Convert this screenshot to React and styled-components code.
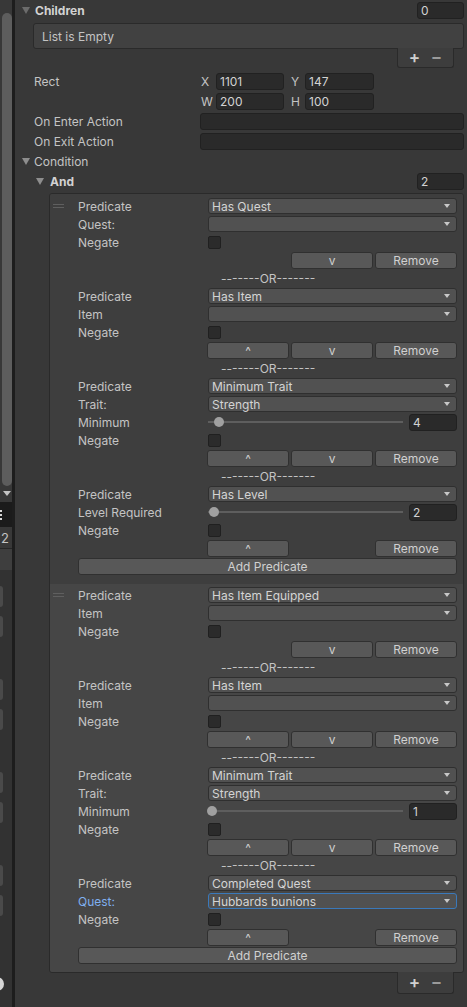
import React from "react";
import styled, { createGlobalStyle } from "styled-components";

const GlobalStyle = createGlobalStyle`
  html, body { margin: 0; padding: 0; background: #383838; }
  body {
    font-family: Inter, "Noto Sans", sans-serif;
    font-size: 12px;
    color: #c4c4c4;
  }
  * { box-sizing: border-box; }
`;

const Screen = styled.div`
  display: flex;
  width: 467px;
  height: 1007px;
  overflow: hidden;
  background: #383838;
`;

/* ---------- clipped side panel on the left ---------- */

const Side = styled.div`
  width: 12px;
  flex-shrink: 0;
  display: flex;
  flex-direction: column;
  overflow: hidden;
  background: #383838;
`;

const ScrollTrack = styled.div`
  height: 502px;
  padding: 13px 0 0 2px;
  display: flex;
  flex-direction: column;
  align-items: center;
`;

const ScrollThumb = styled.div`
  width: 10px;
  height: 473px;
  border-radius: 5px;
  background: #5d5d5d;
`;

const ScrollArrow = styled.div`
  margin-top: 5px;
  border-left: 4px solid transparent;
  border-right: 4px solid transparent;
  border-top: 5px solid #c4c4c4;
`;

const DarkBand = styled.div`
  height: 25px;
  background: #1b1b1b;
  display: flex;
  flex-direction: column;
  justify-content: center;
  gap: 2px;
`;

const KebabDot = styled.div`
  width: 2px;
  height: 2px;
  background: #d8d8d8;
`;

const CountBand = styled.div`
  height: 22px;
  display: flex;
  align-items: center;
  padding-left: 1px;
  font-size: 13px;
  color: #c4c4c4;
  border-bottom: 1px solid #262626;
`;

const LightBand = styled.div`
  height: 21px;
  background: #3e3e3e;
`;

const SideList = styled.div`
  flex: 1;
  background: #323232;
  display: flex;
  flex-direction: column;
  padding-top: 16px;
`;

const NubPair = styled.div`
  display: flex;
  flex-direction: column;
  gap: 9px;
  margin-bottom: 42px;
`;

const Nub = styled.div`
  width: 3px;
  height: 21px;
  border-radius: 0 4px 4px 0;
  background: #4a4a4a;
`;

const SideDot = styled.div`
  width: 14px;
  height: 14px;
  border-radius: 50%;
  background: #d6d6d6;
  margin: 19px 0 0 -10px;
`;

const Divider = styled.div`
  width: 3px;
  flex-shrink: 0;
  background: #1d1d1d;
`;

/* ---------- inspector ---------- */

const Main = styled.div`
  flex: 1;
  display: flex;
  flex-direction: column;
  padding-right: 3px;
  min-width: 0;
`;

const Row = styled.div`
  display: flex;
  align-items: center;
  height: 20px;
  padding-left: ${(p) => p.$indent || 0}px;
`;

const Fold = styled.span`
  width: 0;
  height: 0;
  flex-shrink: 0;
  border-left: 4px solid transparent;
  border-right: 4px solid transparent;
  border-top: 7px solid ${(p) => (p.$dim ? "#6c6c6c" : "#8e8e8e")};
  margin-right: ${(p) => p.$gap}px;
`;

const HeadLabel = styled.span`
  flex: 1;
  font-weight: ${(p) => (p.$bold ? 700 : 400)};
  color: ${(p) => (p.$bold ? "#d2d2d2" : "#c4c4c4")};
`;

const FieldLabel = styled.span`
  width: ${(p) => p.$w}px;
  flex-shrink: 0;
  color: #c4c4c4;
`;

const DarkField = styled.div`
  height: 17px;
  width: ${(p) => (p.$w ? `${p.$w}px` : "auto")};
  flex: ${(p) => (p.$w ? "none" : 1)};
  background: #2a2a2a;
  border: 1px solid #212121;
  border-radius: 3px;
  padding-left: 3px;
  display: flex;
  align-items: center;
  color: #d2d2d2;
`;

const Axis = styled.span`
  width: ${(p) => p.$w}px;
  flex-shrink: 0;
  padding-left: ${(p) => p.$pad || 1}px;
  color: #c4c4c4;
`;

const EmptyBox = styled.div`
  margin: 3px 0 0 18px;
  height: 26px;
  background: #414141;
  border: 1px solid #2a2a2a;
  border-radius: 3px;
  display: flex;
  align-items: center;
  padding-left: 8px;
  color: #c4c4c4;
`;

const ListFooter = styled.div`
  align-self: flex-end;
  margin-right: 10px;
  width: 57px;
  height: ${(p) => p.$h}px;
  margin-top: -1px;
  background: #3d3d3d;
  border: 1px solid #2a2a2a;
  border-top: none;
  border-radius: 0 0 3px 3px;
  display: flex;
  align-items: center;
  justify-content: space-evenly;
  padding-bottom: 1px;
`;

const FooterSign = styled.span`
  font-size: 17px;
  font-weight: 600;
  line-height: 1;
  color: ${(p) => (p.$dim ? "#9a9a9a" : "#d0d0d0")};
`;

const ListBox = styled.div`
  margin: 2px 0 0 34px;
  border: 1px solid #2a2a2a;
  border-radius: 3px;
  overflow: hidden;
`;

const Element = styled.div`
  display: flex;
  background: ${(p) => (p.$alt ? "#464646" : "#3e3e3e")};
  padding: ${(p) => (p.$alt ? "2px 0 8px" : "3px 0 9px")};
`;

const Handle = styled.div`
  width: 28px;
  flex-shrink: 0;
  height: 18px;
  display: flex;
  flex-direction: column;
  justify-content: center;
  gap: 2px;
  padding-left: 3px;
`;

const HandleLine = styled.div`
  width: 11px;
  height: 1px;
  background: #5f5f5f;
`;

const Rows = styled.div`
  flex: 1;
  display: flex;
  flex-direction: column;
  padding-right: 6px;
`;

const ElemRow = styled.div`
  display: flex;
  align-items: center;
  height: 18px;
`;

const ElemLabel = styled.span`
  width: 129px;
  flex-shrink: 0;
  color: ${(p) => (p.$focus ? "#7fafef" : "#c4c4c4")};
`;

const Value = styled.div`
  flex: 1;
  display: flex;
  align-items: center;
  min-width: 0;
`;

const Dropdown = styled.div`
  flex: 1;
  height: 16px;
  margin-left: 1px;
  background: #515151;
  border: 1px solid ${(p) => (p.$focus ? "#3a79bb" : "#2f2f2f")};
  border-radius: 3px;
  display: flex;
  align-items: center;
  justify-content: space-between;
  padding: 0 6px 0 3px;
  color: #d4d4d4;
  white-space: nowrap;
`;

const Caret = styled.span`
  border-left: 3.5px solid transparent;
  border-right: 3.5px solid transparent;
  border-top: 4px solid #c8c8c8;
`;

const Check = styled.div`
  width: 13px;
  height: 13px;
  margin-left: 1px;
  background: #2b2b2b;
  border: 1px solid #202020;
  border-radius: 2px;
`;

const SliderTrack = styled.div`
  position: relative;
  width: 195px;
  height: 2px;
  margin-left: 1px;
  background: #5e5e5e;
  flex-shrink: 0;
`;

const Thumb = styled.div`
  position: absolute;
  top: -4px;
  width: 10px;
  height: 10px;
  border-radius: 50%;
  background: #a0a0a0;
`;

const NumField = styled.div`
  margin-left: 6px;
  flex: 1;
  height: 17px;
  background: #2a2a2a;
  border: 1px solid #212121;
  border-radius: 3px;
  padding-left: 3px;
  display: flex;
  align-items: center;
  color: #d2d2d2;
`;

const ButtonGrid = styled.div`
  flex: 1;
  display: grid;
  grid-template-columns: repeat(3, 1fr);
  gap: 2px;
`;

const Button = styled.div`
  height: 17px;
  flex: ${(p) => (p.$wide ? 1 : "none")};
  background: #585858;
  border: 1px solid #303030;
  border-radius: 3px;
  display: flex;
  align-items: center;
  justify-content: center;
  color: #d0d0d0;
  grid-column: ${(p) => p.$col || "auto"};
`;

const OrText = styled.span`
  padding-left: 14px;
  color: #c4c4c4;
`;

/* ---------- data ---------- */

const groups = [
  [
    { predicate: "Has Quest", fields: [{ label: "Quest:", type: "dropdown" }], up: false, down: true },
    { predicate: "Has Item", fields: [{ label: "Item", type: "dropdown" }], up: true, down: true },
    {
      predicate: "Minimum Trait",
      fields: [
        { label: "Trait:", type: "dropdown", value: "Strength" },
        { label: "Minimum", type: "slider", value: 4, pos: 6 },
      ],
      up: true,
      down: true,
    },
    {
      predicate: "Has Level",
      fields: [{ label: "Level Required", type: "slider", value: 2, pos: 1 }],
      up: true,
      down: false,
    },
  ],
  [
    { predicate: "Has Item Equipped", fields: [{ label: "Item", type: "dropdown" }], up: false, down: true },
    { predicate: "Has Item", fields: [{ label: "Item", type: "dropdown" }], up: true, down: true },
    {
      predicate: "Minimum Trait",
      fields: [
        { label: "Trait:", type: "dropdown", value: "Strength" },
        { label: "Minimum", type: "slider", value: 1, pos: -1 },
      ],
      up: true,
      down: true,
    },
    {
      predicate: "Completed Quest",
      fields: [{ label: "Quest:", type: "dropdown", value: "Hubbards bunions", focus: true }],
      up: true,
      down: false,
    },
  ],
];

const Field = ({ f }) => (
  <ElemRow>
    <ElemLabel $focus={f.focus}>{f.label}</ElemLabel>
    <Value>
      {f.type === "dropdown" ? (
        <Dropdown $focus={f.focus}>
          <span>{f.value || ""}</span>
          <Caret />
        </Dropdown>
      ) : (
        <>
          <SliderTrack>
            <Thumb style={{ left: f.pos }} />
          </SliderTrack>
          <NumField>{f.value}</NumField>
        </>
      )}
    </Value>
  </ElemRow>
);

const Predicate = ({ p, last }) => (
  <>
    <ElemRow>
      <ElemLabel>Predicate</ElemLabel>
      <Value>
        <Dropdown>
          <span>{p.predicate}</span>
          <Caret />
        </Dropdown>
      </Value>
    </ElemRow>
    {p.fields.map((f, i) => (
      <Field key={i} f={f} />
    ))}
    <ElemRow>
      <ElemLabel>Negate</ElemLabel>
      <Value>
        <Check />
      </Value>
    </ElemRow>
    <ElemRow>
      <ElemLabel />
      <ButtonGrid>
        {p.up && <Button $col={1}>^</Button>}
        {p.down && <Button $col={2}>v</Button>}
        <Button $col={3}>Remove</Button>
      </ButtonGrid>
    </ElemRow>
    {!last && (
      <ElemRow>
        <ElemLabel />
        <OrText>-------OR-------</OrText>
      </ElemRow>
    )}
  </>
);

const Group = ({ items, alt }) => (
  <Element $alt={alt}>
    <Handle>
      <HandleLine />
      <HandleLine />
    </Handle>
    <Rows>
      {items.map((p, i) => (
        <Predicate key={i} p={p} last={i === items.length - 1} />
      ))}
      <ElemRow>
        <Button $wide>Add Predicate</Button>
      </ElemRow>
    </Rows>
  </Element>
);

const App = () => {
  return (
    <Screen>
      <GlobalStyle />
      <Side>
        <ScrollTrack>
          <ScrollThumb />
          <ScrollArrow />
        </ScrollTrack>
        <DarkBand>
          <KebabDot />
          <KebabDot />
          <KebabDot />
        </DarkBand>
        <CountBand>2</CountBand>
        <LightBand />
        <SideList>
          {[0, 1, 2, 3].map((i) => (
            <NubPair key={i}>
              <Nub />
              <Nub />
            </NubPair>
          ))}
          <SideDot />
        </SideList>
      </Side>
      <Divider />
      <Main>
        <Row $indent={7}>
          <Fold $gap={5} $dim />
          <HeadLabel $bold>Children</HeadLabel>
          <DarkField $w={47}>0</DarkField>
        </Row>
        <EmptyBox>List is Empty</EmptyBox>
        <ListFooter $h={20}>
          <FooterSign>+</FooterSign>
          <FooterSign $dim>−</FooterSign>
        </ListFooter>
        <Row $indent={19} style={{ marginTop: 3 }}>
          <FieldLabel $w={166}>Rect</FieldLabel>
          <Axis $w={16}>X</Axis>
          <DarkField $w={68}>1101</DarkField>
          <Axis $w={21} $pad={7}>Y</Axis>
          <DarkField $w={69}>147</DarkField>
        </Row>
        <Row $indent={19}>
          <FieldLabel $w={166} />
          <Axis $w={16}>W</Axis>
          <DarkField $w={68}>200</DarkField>
          <Axis $w={21} $pad={7}>H</Axis>
          <DarkField $w={69}>100</DarkField>
        </Row>
        <Row $indent={19}>
          <FieldLabel $w={166}>On Enter Action</FieldLabel>
          <DarkField />
        </Row>
        <Row $indent={19}>
          <FieldLabel $w={166}>On Exit Action</FieldLabel>
          <DarkField />
        </Row>
        <Row $indent={7}>
          <Fold $gap={4} />
          <HeadLabel>Condition</HeadLabel>
        </Row>
        <Row $indent={21}>
          <Fold $gap={6} />
          <HeadLabel $bold>And</HeadLabel>
          <DarkField $w={47}>2</DarkField>
        </Row>
        <ListBox>
          {groups.map((g, i) => (
            <Group key={i} items={g} alt={i === 1} />
          ))}
        </ListBox>
        <ListFooter $h={22}>
          <FooterSign>+</FooterSign>
          <FooterSign $dim>−</FooterSign>
        </ListFooter>
      </Main>
    </Screen>
  );
};

export default App;
